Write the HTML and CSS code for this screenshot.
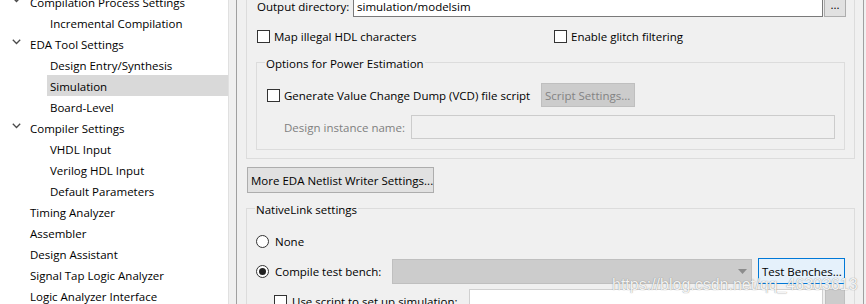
FILE: index.html
```html
<!DOCTYPE html>
<html lang="en">
<head>
    <meta charset="UTF-8">
    <title>Settings - Simulation</title>
    <link rel="stylesheet" href="styles.css">
</head>
<body>
    <div class="window">
        <!-- Category tree -->
        <nav class="tree">
            <div class="tree-list">
                <div class="row top"><span class="chev"><svg width="9" height="6" viewBox="0 0 9 6"><polyline points="0.8,0.8 4.5,4.5 8.2,0.8"/></svg></span><span class="label">Compilation Process Settings</span></div>
                <div class="row sub"><span class="label">Incremental Compilation</span></div>
                <div class="row top"><span class="chev"><svg width="9" height="6" viewBox="0 0 9 6"><polyline points="0.8,0.8 4.5,4.5 8.2,0.8"/></svg></span><span class="label">EDA Tool Settings</span></div>
                <div class="row sub"><span class="label">Design Entry/Synthesis</span></div>
                <div class="row sub selected"><span class="label">Simulation</span></div>
                <div class="row sub"><span class="label">Board-Level</span></div>
                <div class="row top"><span class="chev"><svg width="9" height="6" viewBox="0 0 9 6"><polyline points="0.8,0.8 4.5,4.5 8.2,0.8"/></svg></span><span class="label">Compiler Settings</span></div>
                <div class="row sub"><span class="label">VHDL Input</span></div>
                <div class="row sub"><span class="label">Verilog HDL Input</span></div>
                <div class="row sub"><span class="label">Default Parameters</span></div>
                <div class="row top"><span class="chev"></span><span class="label">Timing Analyzer</span></div>
                <div class="row top"><span class="chev"></span><span class="label">Assembler</span></div>
                <div class="row top"><span class="chev"></span><span class="label">Design Assistant</span></div>
                <div class="row top"><span class="chev"></span><span class="label">Signal Tap Logic Analyzer</span></div>
                <div class="row top"><span class="chev"></span><span class="label">Logic Analyzer Interface</span></div>
            </div>
        </nav>

        <div class="splitter"></div>

        <!-- Simulation page (scrolled down a little) -->
        <main class="panel">
            <div class="scroll">
                <div class="eda-box">
                    <div class="output-row">
                        <span class="output-label">Output directory:</span>
                        <div class="input">simulation/modelsim</div>
                        <span class="btn dots">...</span>
                    </div>

                    <div class="check-row">
                        <span class="check"><span class="box"></span>Map illegal HDL characters</span>
                        <span class="check"><span class="box"></span>Enable glitch filtering</span>
                    </div>

                    <fieldset class="group power">
                        <legend>Options for Power Estimation</legend>
                        <div class="vcd-row">
                            <span class="check vcd"><span class="box"></span>Generate Value Change Dump (VCD) file script</span>
                            <span class="btn disabled script-btn">Script Settings...</span>
                        </div>
                        <div class="instance-row">
                            <span class="instance-label">Design instance name:</span>
                            <div class="input disabled"></div>
                        </div>
                    </fieldset>
                </div>

                <span class="btn more">More EDA Netlist Writer Settings...</span>

                <fieldset class="group native">
                    <legend>NativeLink settings</legend>
                    <div class="radio-row">
                        <span class="radio"><span class="dot"></span>None</span>
                    </div>
                    <div class="compile-row">
                        <span class="radio compile"><span class="dot checked"></span>Compile test bench:</span>
                        <div class="combo"><svg width="9" height="5" viewBox="0 0 9 5"><polygon points="0,0 9,0 4.5,5"/></svg></div>
                        <span class="btn focus bench-btn">Test Benches...</span>
                    </div>
                    <div class="script-row">
                        <span class="check use-script"><span class="box"></span>Use script to set up simulation:</span>
                        <div class="input light"></div>
                        <span class="btn disabled browse"></span>
                    </div>
                </fieldset>
            </div>
        </main>
    </div>

    <div class="watermark">https://blog.csdn.net/qq_46303613</div>
</body>
</html>
```

FILE: styles.css
```css
* {
    margin: 0;
    padding: 0;
    box-sizing: border-box;
}

body {
    font-family: 'Open Sans', sans-serif;
    font-size: 11.5px;
    color: #000;
    background-color: #f0f0f0;
    width: 866px;
    height: 304px;
    overflow: hidden;
    position: relative;
}

.window {
    display: flex;
    height: 304px;
}

/* Arbre des catégories */
.tree {
    width: 229px;
    flex: none;
    background-color: #fff;
    border-right: 1px solid #e0e0e0;
    overflow: hidden;
}

.tree-list {
    margin-top: -9px;
}

.row {
    display: flex;
    align-items: center;
    height: 21px;
    white-space: nowrap;
}

.row.top {
    padding-left: 10px;
}

.row.sub {
    padding-left: 47px;
}

.row .chev {
    width: 17px;
    flex: none;
    display: flex;
    align-items: center;
    padding-left: 2px;
    padding-bottom: 3px;
}

.chev polyline {
    fill: none;
    stroke: #4a4a4a;
    stroke-width: 1.3;
}

.row .label {
    flex: 1;
    height: 21px;
    line-height: 23px;
    padding-left: 3px;
}

.row.selected .label {
    background-color: #d9d9d9;
}

.splitter {
    width: 7px;
    flex: none;
}

/* Page de droite */
.panel {
    width: 628px;
    flex: none;
    border-left: 1px solid #a0a0a0;
    border-right: 1px solid #a0a0a0;
    overflow: hidden;
}

.scroll {
    margin-top: -14px;
    padding: 0 8px 0 9px;
}

.eda-box {
    border: 1px solid #dcdcdc;
    padding: 7px 9px 8px;
}

.output-row {
    display: flex;
    align-items: center;
    padding-left: 1px;
    margin-right: -1px;
}

.output-label {
    width: 96px;
    flex: none;
    padding-top: 2px;
}

.input {
    flex: 1;
    height: 23px;
    line-height: 23px;
    padding-left: 3px;
    background-color: #fff;
    border: 1px solid #7a7a7a;
}

.input.disabled {
    height: 24px;
    background-color: #f0f0f0;
    border-color: #cccccc;
}

.input.light {
    flex: none;
    width: 354px;
    height: 24px;
    border-color: #d0d0d0;
}

.btn {
    display: inline-flex;
    align-items: center;
    height: 24px;
    padding-left: 3px;
    padding-top: 1px;
    background-color: #e1e1e1;
    border: 1px solid #adadad;
    white-space: nowrap;
}

.btn.dots {
    width: 22px;
    height: 22px;
    margin-left: 1px;
    padding: 0 0 3px 0;
    justify-content: center;
}

.btn.disabled {
    background-color: #cccccc;
    border-color: #bfbfbf;
    color: #838383;
}

.btn.focus {
    background-color: #e5f1fb;
    border-color: #0078d7;
}

.check,
.radio {
    display: flex;
    align-items: center;
    gap: 4px;
    white-space: nowrap;
}

.radio {
    gap: 6px;
}

.box {
    width: 13px;
    height: 13px;
    flex: none;
    background-color: #fff;
    border: 1px solid #333;
}

.dot {
    width: 13px;
    height: 13px;
    flex: none;
    border-radius: 50%;
    background-color: #fff;
    border: 1px solid #333;
    display: flex;
    align-items: center;
    justify-content: center;
}

.dot.checked::after {
    content: "";
    width: 7px;
    height: 7px;
    border-radius: 50%;
    background-color: #222;
}

.check-row {
    display: grid;
    grid-template-columns: 297px 1fr;
    height: 21px;
    margin-top: 8px;
    padding-left: 1px;
}

.check-row .check {
    padding-top: 1px;
}

/* Cadres de groupe */
.group {
    border: 1px solid #dcdcdc;
    min-width: 0;
}

.group legend {
    line-height: 16px;
    padding: 4px 1px 0;
}

.power {
    margin-top: 6px;
    padding: 0 9px 10px 10px;
}

.power legend {
    margin-left: -2px;
}

.vcd-row {
    display: flex;
    align-items: center;
    height: 24px;
    margin-top: 11px;
}

.check.vcd {
    width: 274px;
    padding-top: 1px;
}

.script-btn {
    width: 94px;
}

.instance-row {
    display: flex;
    align-items: center;
    margin-top: 8px;
}

.instance-label {
    width: 138px;
    margin-right: 6px;
    padding-top: 1px;
    text-align: right;
    color: #7f7f7f;
}

.btn.more {
    display: flex;
    width: 187px;
    height: 26px;
    margin: 8px 0 0 1px;
}

.native {
    margin-top: 5px;
    padding: 0 9px 20px 9px;
}

.native legend {
    margin-left: -1px;
}

.radio-row {
    display: flex;
    align-items: center;
    height: 21px;
    margin-top: 13px;
}

.compile-row {
    display: flex;
    align-items: center;
    height: 26px;
    margin-top: 6px;
}

.radio.compile {
    width: 136px;
}

.combo {
    width: 360px;
    height: 25px;
    display: flex;
    align-items: center;
    justify-content: flex-end;
    padding-right: 4px;
    background-color: #cccccc;
    border: 1px solid #bfbfbf;
}

.combo polygon {
    fill: #8c8c8c;
}

.bench-btn {
    width: 87px;
    height: 26px;
    margin-left: 6px;
}

.script-row {
    display: flex;
    align-items: center;
    height: 24px;
    margin-top: 5px;
}

.check.use-script {
    width: 195px;
    margin-left: 18px;
    gap: 5px;
}

.btn.browse {
    width: 20px;
    margin-left: 2px;
}

/* Filigrane */
.watermark {
    position: absolute;
    left: 612px;
    top: 275px;
    font-family: 'Liberation Sans', Arial, sans-serif;
    font-size: 16px;
    line-height: 19px;
    color: rgba(255, 255, 255, 0.92);
    text-shadow: 0 0 1px rgba(90, 90, 90, 0.8);
    white-space: nowrap;
}
```
